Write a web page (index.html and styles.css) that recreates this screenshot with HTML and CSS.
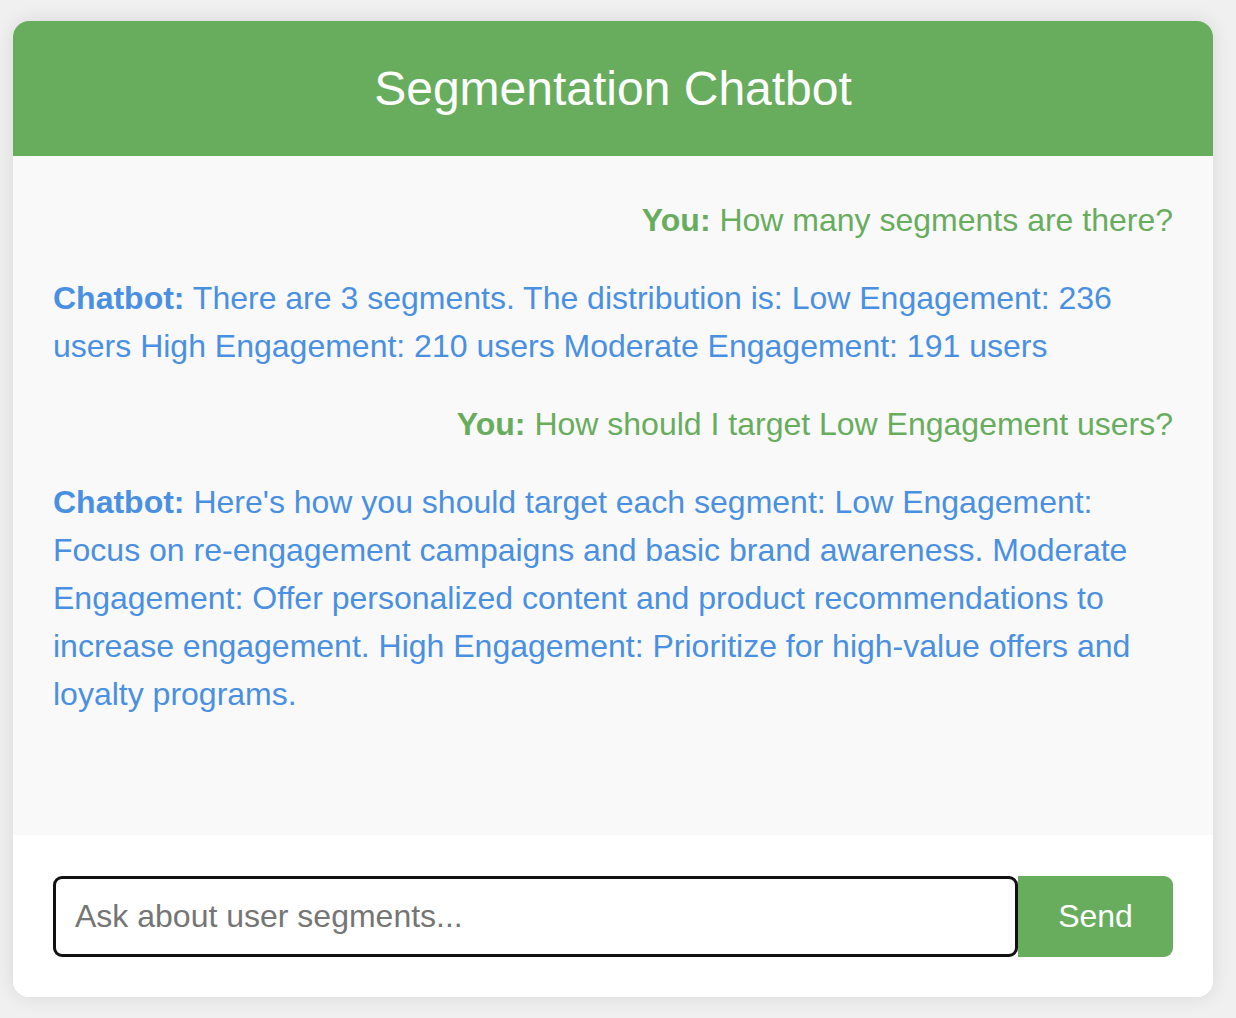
FILE: index.html
```html
<!DOCTYPE html>
<html lang="en">
<head>
<meta charset="utf-8">
<title>Segmentation Chatbot</title>
<link rel="stylesheet" href="styles.css">
</head>
<body>
<div class="card">
  <header class="header">
    <h1 class="title">Segmentation Chatbot</h1>
  </header>
  <div class="chat">
    <div class="msg msg-user"><strong>You:</strong> How many segments are there?</div>
    <div class="msg msg-bot"><strong>Chatbot:</strong> There are 3 segments. The distribution is: Low Engagement: 236 users High Engagement: 210 users Moderate Engagement: 191 users</div>
    <div class="msg msg-user"><strong>You:</strong> How should I target Low Engagement users?</div>
    <div class="msg msg-bot"><strong>Chatbot:</strong> Here's how you should target each segment: Low Engagement: Focus on re-engagement campaigns and basic brand awareness. Moderate Engagement: Offer personalized content and product recommendations to increase engagement. High Engagement: Prioritize for high-value offers and loyalty programs.</div>
  </div>
  <div class="composer">
    <input class="input" type="text" placeholder="Ask about user segments...">
    <button class="send" type="button">Send</button>
  </div>
</div>
</body>
</html>
```
FILE: styles.css
```css
* { box-sizing: border-box; }
html, body { margin: 0; padding: 0; }
body {
  background: #f0f0f0;
  font-family: "Liberation Sans", Arial, Helvetica, sans-serif;
  padding: 21px 0 21px 13px;
}
.card {
  width: 1200px;
  background: #ffffff;
  border-radius: 16px;
  box-shadow: 0 0 20px rgba(0, 0, 0, 0.1);
  overflow: hidden;
}
.header {
  background: #68ad5d;
  padding: 40px 0;
  text-align: center;
}
.title {
  margin: 0;
  color: #ffffff;
  font-size: 48px;
  font-weight: normal;
  line-height: 55px;
}
.chat {
  height: 679px;
  padding: 40px;
  background: #f9f9f9;
  overflow-y: auto;
}
.msg {
  font-size: 32px;
  line-height: 48px;
  margin-bottom: 30px;
}
.msg-user {
  color: #68ad5d;
  text-align: right;
}
.msg-bot {
  color: #4a90e2;
}
.composer {
  display: flex;
  padding: 41px 40px 40px;
  background: #ffffff;
}
.input {
  flex: 1;
  height: 81px;
  border: 3px solid #111111;
  border-radius: 9px;
  padding: 0 19px;
  font-family: inherit;
  font-size: 32px;
  color: #222;
  outline: none;
  background: #fff;
}
.input::placeholder { color: #757575; }
.send {
  width: 155px;
  height: 81px;
  border: none;
  background: #68ad5d;
  color: #ffffff;
  font-family: inherit;
  font-size: 32px;
  border-radius: 0 9px 9px 0;
  padding: 0;
}
```
